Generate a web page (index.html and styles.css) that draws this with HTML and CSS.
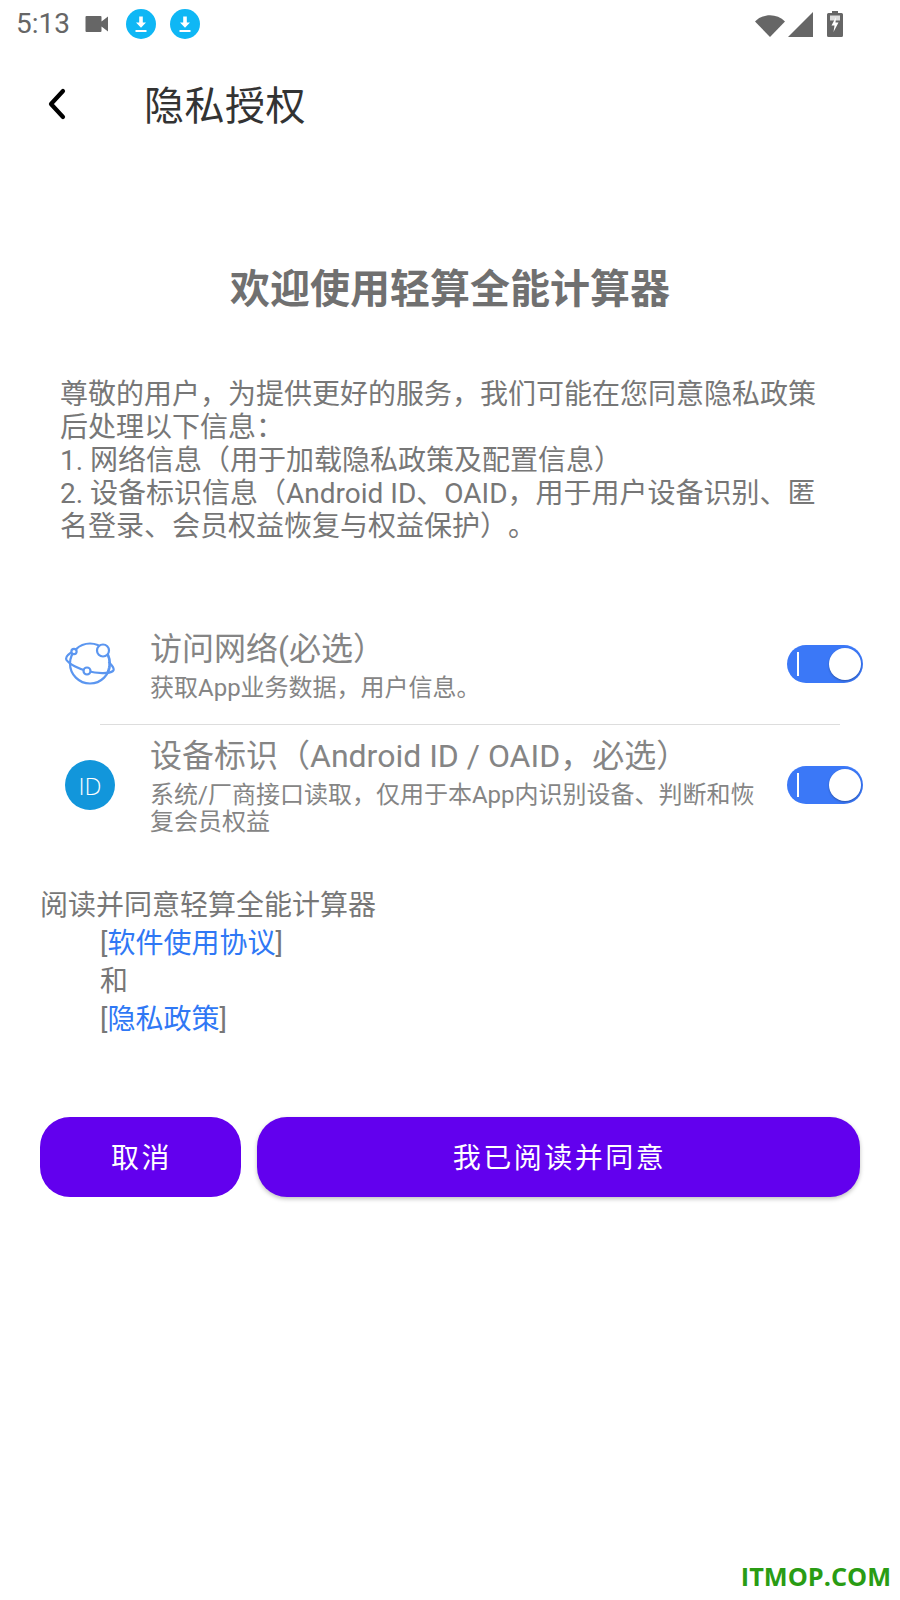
FILE: index.html
```html
<!DOCTYPE html>
<html lang="zh">
<head>
<meta charset="utf-8">
<title>隐私授权</title>
<link rel="stylesheet" href="styles.css">
</head>
<body>
<div class="status">
  <span class="time">5:13</span>
  <svg class="cam" viewBox="0 0 24 18"><path d="M1.500 1h14a1 1 0 0 1 1 1v4.500L23 1.500v15L16.500 11.500V16a1 1 0 0 1-1 1h-14a1 1 0 0 1-1-1V2a1 1 0 0 1 1-1z" fill="#666"/></svg>
  <svg class="dl" viewBox="0 0 30 30"><circle cx="15" cy="15" r="15" fill="#0fb7f5"/><path d="M13.200 7.500h3.600v6h3.200L15 18.800 10 13.500h3.200z M9.500 21h11v2h-11z" fill="#fff"/></svg>
  <svg class="dl" viewBox="0 0 30 30"><circle cx="15" cy="15" r="15" fill="#0fb7f5"/><path d="M13.200 7.500h3.600v6h3.200L15 18.800 10 13.500h3.200z M9.500 21h11v2h-11z" fill="#fff"/></svg>
  <span class="spacer"></span>
  <svg class="wifi" viewBox="0 0 30 25"><path d="M0 9.500C8 1 22 1 30 9.500L15 25z" fill="#666"/></svg>
  <svg class="signal" viewBox="0 0 25 25"><path d="M25 0v25H0z" fill="#666"/></svg>
  <svg class="batt" viewBox="0 0 16 26"><path d="M5 0h6v2h3.500a1.500 1.500 0 0 1 1.500 1.500v21a1.500 1.500 0 0 1-1.500 1.500h-13A1.500 1.500 0 0 1 0 24.500v-21A1.500 1.500 0 0 1 1.500 2H5z" fill="#666"/><path d="M3 4.500h10v5H3z" fill="#ddd"/><path d="M9 6L4.500 14.500H7.500L6.500 21L11.500 11.500H8.500z" fill="#fff"/></svg>
</div>
<header class="bar">
  <svg class="back" viewBox="0 0 20 32"><path d="M16 3L4 16l12 13" fill="none" stroke="#000" stroke-width="4.200" stroke-linecap="round" stroke-linejoin="round"/></svg>
  <h1 class="bar-title">隐私授权</h1>
</header>
<main class="content">
  <h2 class="welcome">欢迎使用轻算全能计算器</h2>
  <p class="intro">尊敬的用户，为提供更好的服务，我们可能在您同意隐私政策后处理以下信息：<br>1. 网络信息（用于加载隐私政策及配置信息）<br>2. 设备标识信息（Android ID、OAID，用于用户设备识别、匿名登录、会员权益恢复与权益保护）。</p>
  <section class="perm perm-first">
    <svg class="perm-icon" viewBox="0 0 50 44"><g fill="none" stroke="#5b96f0" stroke-width="2.200"><circle cx="25" cy="21.500" r="20"/><path d="M9 9C3 12 0 15 1.500 18C4 22 14 27 22 29C32 31.500 44 32 48 29C50 27 47 23 43.500 20"/><path d="M42 13C44.500 18 44.500 24 42 30" stroke-width="1"/><circle cx="38" cy="8.500" r="6" fill="#fff"/><circle cx="9" cy="9.500" r="2.600" fill="#fff"/><circle cx="22" cy="29" r="3.500" fill="#fff"/></g></svg>
    <div class="perm-text">
      <div class="perm-title">访问网络(必选）</div>
      <div class="perm-sub">获取App业务数据，用户信息。</div>
    </div>
    <div class="switch"><span class="tick"></span><span class="knob"></span></div>
  </section>
  <div class="rule"></div>
  <section class="perm perm-second">
    <div class="id-icon">ID</div>
    <div class="perm-text">
      <div class="perm-title">设备标识（Android ID / OAID，必选）</div>
      <div class="perm-sub">系统/厂商接口读取，仅用于本App内识别设备、判断和恢复会员权益</div>
    </div>
    <div class="switch"><span class="tick"></span><span class="knob"></span></div>
  </section>
  <div class="agree">
    <div>阅读并同意轻算全能计算器</div>
    <div class="agree-item">[<a class="link">软件使用协议</a>]</div>
    <div class="agree-item">和</div>
    <div class="agree-item">[<a class="link">隐私政策</a>]</div>
  </div>
  <div class="actions">
    <button class="btn btn-cancel">取消</button>
    <button class="btn btn-ok">我已阅读并同意</button>
  </div>
</main>
<div class="watermark">ITMOP.COM</div>
</body>
</html>
```
FILE: styles.css
```css
* { box-sizing: border-box; }
html, body { margin: 0; padding: 0; }
body {
  position: relative;
  width: 900px;
  height: 1600px;
  overflow: hidden;
  background: #fff;
  color: #666;
  font-family: Roboto, "Noto Sans CJK SC", sans-serif;
  text-spacing-trim: space-all;
}
.status {
  display: flex;
  align-items: center;
  height: 48px;
  padding: 0 57px 0 16px;
  color: #666;
}
.time { font-size: 28px; line-height: 48px; width: 69px; }
.cam { width: 24px; height: 18px; margin: 0 17px 0 0; }
.dl { width: 30px; height: 30px; margin-right: 14px; }
.spacer { flex: 1; }
.wifi { width: 30px; height: 25px; margin-right: 3px; }
.signal { width: 25px; height: 25px; margin-right: 14px; }
.batt { width: 16px; height: 26px; }
.bar {
  display: flex;
  align-items: center;
  height: 116px;
  padding: 0 0 6px 47px;
}
.back { width: 20px; height: 32px; margin-top: 2px; }
.bar-title {
  margin: 0 0 0 77px;
  font-size: 40px;
  font-weight: 400;
  letter-spacing: .5px;
  color: #333;
}
.content { display: flex; flex-direction: column; }
.welcome {
  margin: 93px 0 0;
  text-align: center;
  font-size: 40px;
  line-height: 66px;
  font-weight: 700;
  color: #707070;
}
.intro {
  margin: 55px 0 0;
  padding: 0 60px;
  font-size: 28px;
  line-height: 33px;
  color: #777;
}
.perm { display: flex; align-items: center; height: 120px; padding: 0 37px 0 65px; }
.perm-first { margin-top: 61px; }
.perm-icon { width: 50px; height: 44px; flex: none; }
.id-icon {
  display: flex;
  align-items: center;
  justify-content: center;
  width: 50px;
  height: 50px;
  flex: none;
  border-radius: 50%;
  background: #1296db;
  color: #fff;
  font-family: "Open Sans", sans-serif;
  font-size: 24px;
  font-weight: 300;
}
.perm-text { flex: 1; min-width: 0; margin: 0 28px 0 35px; padding-top: 2px; }
.perm-title { margin-bottom: 6px; font-size: 32px; line-height: 40px; color: #858585; white-space: nowrap; }
.perm-sub { font-size: 24px; line-height: 27px; color: #858585; }
.switch {
  position: relative;
  flex: none;
  width: 76px;
  height: 38px;
  border-radius: 19px;
  background: #3b78f7;
}
.tick { position: absolute; left: 10px; top: 7px; width: 2px; height: 24px; background: #fff; }
.knob {
  position: absolute;
  right: 2px;
  top: 3px;
  width: 32px;
  height: 32px;
  border-radius: 50%;
  background: #fff;
  box-shadow: 0 1px 2px rgba(0, 0, 0, .3);
}
.rule { height: 1px; margin: 0 60px 0 100px; background: #ddd; }
.agree {
  margin-top: 42px;
  padding-left: 40px;
  font-size: 28px;
  line-height: 38px;
  color: #777;
}
.agree-item { padding-left: 60px; }
.link { color: #2f78f5; }
.actions { display: flex; gap: 16px; margin-top: 78px; padding: 0 40px; }
.btn {
  height: 80px;
  padding: 0 0 2px 2px;
  border: 0;
  border-radius: 30px;
  background: #6200ee;
  color: #fff;
  font-family: inherit;
  font-size: 28px;
  letter-spacing: 2.500px;
}
.btn-cancel { width: 201px; }
.btn-ok { width: 603px; box-shadow: 0 2px 4px rgba(0, 0, 0, .25); }
.watermark {
  position: absolute;
  right: 9px;
  bottom: 7px;
  font-family: "Open Sans", sans-serif;
  font-size: 25.300px;
  font-weight: 700;
  color: #2a9c14;
}
```
